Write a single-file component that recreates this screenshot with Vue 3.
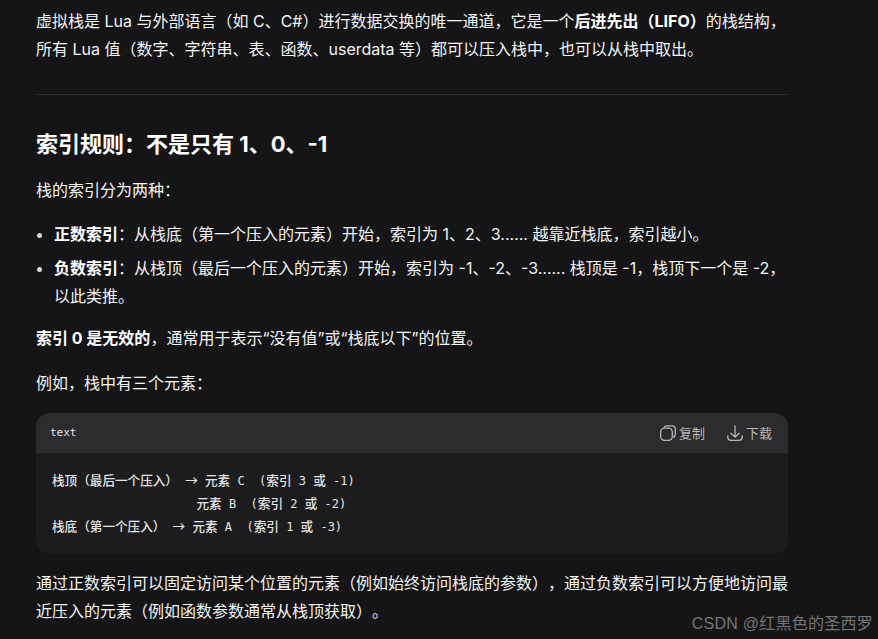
<template>
  <main class="page">
    <article class="doc">
      <p class="intro">虚拟栈是 Lua 与外部语言（如 C、C#）进行数据交换的唯一通道，它是一个<strong>后进先出（LIFO）</strong>的栈结构，所有 Lua 值（数字、字符串、表、函数、userdata 等）都可以压入栈中，也可以从栈中取出。</p>
      <hr class="rule" />
      <h2 class="title">索引规则：不是只有 1、0、-1</h2>
      <p class="lead">栈的索引分为两种：</p>
      <ul class="list">
        <li><strong>正数索引</strong>：从栈底（第一个压入的元素）开始，索引为 1、2、3...... 越靠近栈底，索引越小。</li>
        <li><strong>负数索引</strong>：从栈顶（最后一个压入的元素）开始，索引为 -1、-2、-3...... 栈顶是 -1，栈顶下一个是 -2，以此类推。</li>
      </ul>
      <p class="zero"><strong>索引 0 是无效的</strong>，通常用于表示“没有值”或“栈底以下”的位置。</p>
      <p class="example">例如，栈中有三个元素：</p>
      <section class="code">
        <header class="code-head">
          <span class="lang">text</span>
          <div class="actions">
            <span class="action">
              <svg width="16" height="16" viewBox="0 0 16 16" fill="none" stroke="#b8b8b8" stroke-width="1.3">
                <rect x="0.7" y="3.200" width="11.600" height="12.200" rx="3.800" />
                <path d="M4 2.600C4.500 1.400 5.500.8 7 .8h5c2 0 3.300 1.300 3.300 3.200v5.200c0 1.500-.8 2.600-2.200 3.100" />
              </svg>
              <span>复制</span>
            </span>
            <span class="action">
              <svg width="16" height="16" viewBox="0 0 16 16" fill="none" stroke="#b8b8b8" stroke-width="1.3" stroke-linecap="round" stroke-linejoin="round">
                <path d="M8 1v11M3.800 8.200 8 12l4.200-3.800M.8 10.800v1.500c0 1.900 1.200 3 3 3h8.400c1.800 0 3-1.100 3-3v-1.500" />
              </svg>
              <span>下载</span>
            </span>
          </div>
        </header>
        <pre class="code-body"><span class="cn">栈顶（最后一个压入）</span> <span class="cn">→</span> <span class="cn">元素</span> C  (<span class="cn">索引</span> 3 <span class="cn">或</span> -1)
                    <span class="cn">元素</span> B  (<span class="cn">索引</span> 2 <span class="cn">或</span> -2)
<span class="cn">栈底（第一个压入）</span> <span class="cn">→</span> <span class="cn">元素</span> A  (<span class="cn">索引</span> 1 <span class="cn">或</span> -3)</pre>
      </section>
      <p class="outro">通过正数索引可以固定访问某个位置的元素（例如始终访问栈底的参数），通过负数索引可以方便地访问最近压入的元素（例如函数参数通常从栈顶获取）。</p>
    </article>
    <span class="mark">CSDN @红黑色的圣西罗</span>
  </main>
</template>

<script setup>
</script>

<style>
html, body { margin: 0; background: #151517; overflow: hidden; }
</style>

<style scoped>
.page {
  position: relative;
  width: 878px;
  height: 639px;
  overflow: hidden;
  background: #151517;
  color: #f4f4f4;
  font-family: Inter, "Noto Sans CJK SC", sans-serif;
  font-size: 16px;
  line-height: 28px;
  text-spacing-trim: space-all;
}
.doc { width: 752px; padding: 7px 0 0 36px; }
p { margin: 0; }
strong { font-weight: 700; color: #fff; }
.rule { height: 1px; margin: 31px 0 0; border: 0; background: #2e2e30; }
.title { margin: 31px 0 0; font-size: 22px; line-height: 36px; font-weight: 700; color: #fff; }
.lead { margin-top: 14px; }
.list { margin: 16px 0 0; padding: 0 0 0 18px; }
.list li { margin-bottom: 6px; }
.list li::marker { color: #d8d8d8; }
.zero { margin-top: 14px; }
.example { margin-top: 17px; }
.code { margin-top: 16px; border-radius: 14px; overflow: hidden; background: #1c1c1e; }
.code-head {
  display: flex;
  align-items: center;
  justify-content: space-between;
  height: 40px;
  padding: 0 16px 0 14px;
  background: #2c2c2e;
}
.lang { font-family: "DejaVu Sans Mono", "Noto Sans CJK SC", monospace; font-size: 11px; color: #e8e8e8; }
.actions { display: flex; gap: 22px; }
.action { display: flex; align-items: center; gap: 3px; font-size: 13px; color: #b8b8b8; }
.code-body {
  margin: 0;
  padding: 16px;
  font-family: "DejaVu Sans Mono", "Noto Sans CJK SC", monospace;
  font-size: 12px;
  line-height: 22px;
  color: #e4e4e4;
}
.cn { font-family: "Noto Sans CJK SC", sans-serif; font-size: 12.600px; font-weight: 500; }
.outro { margin-top: 15px; }
.mark {
  position: absolute;
  right: 5px;
  bottom: 5px;
  font-family: "Liberation Sans", "Noto Sans CJK SC", sans-serif;
  font-size: 16px;
  letter-spacing: 0.25px;
  line-height: 20px;
  color: #757575;
}
</style>
